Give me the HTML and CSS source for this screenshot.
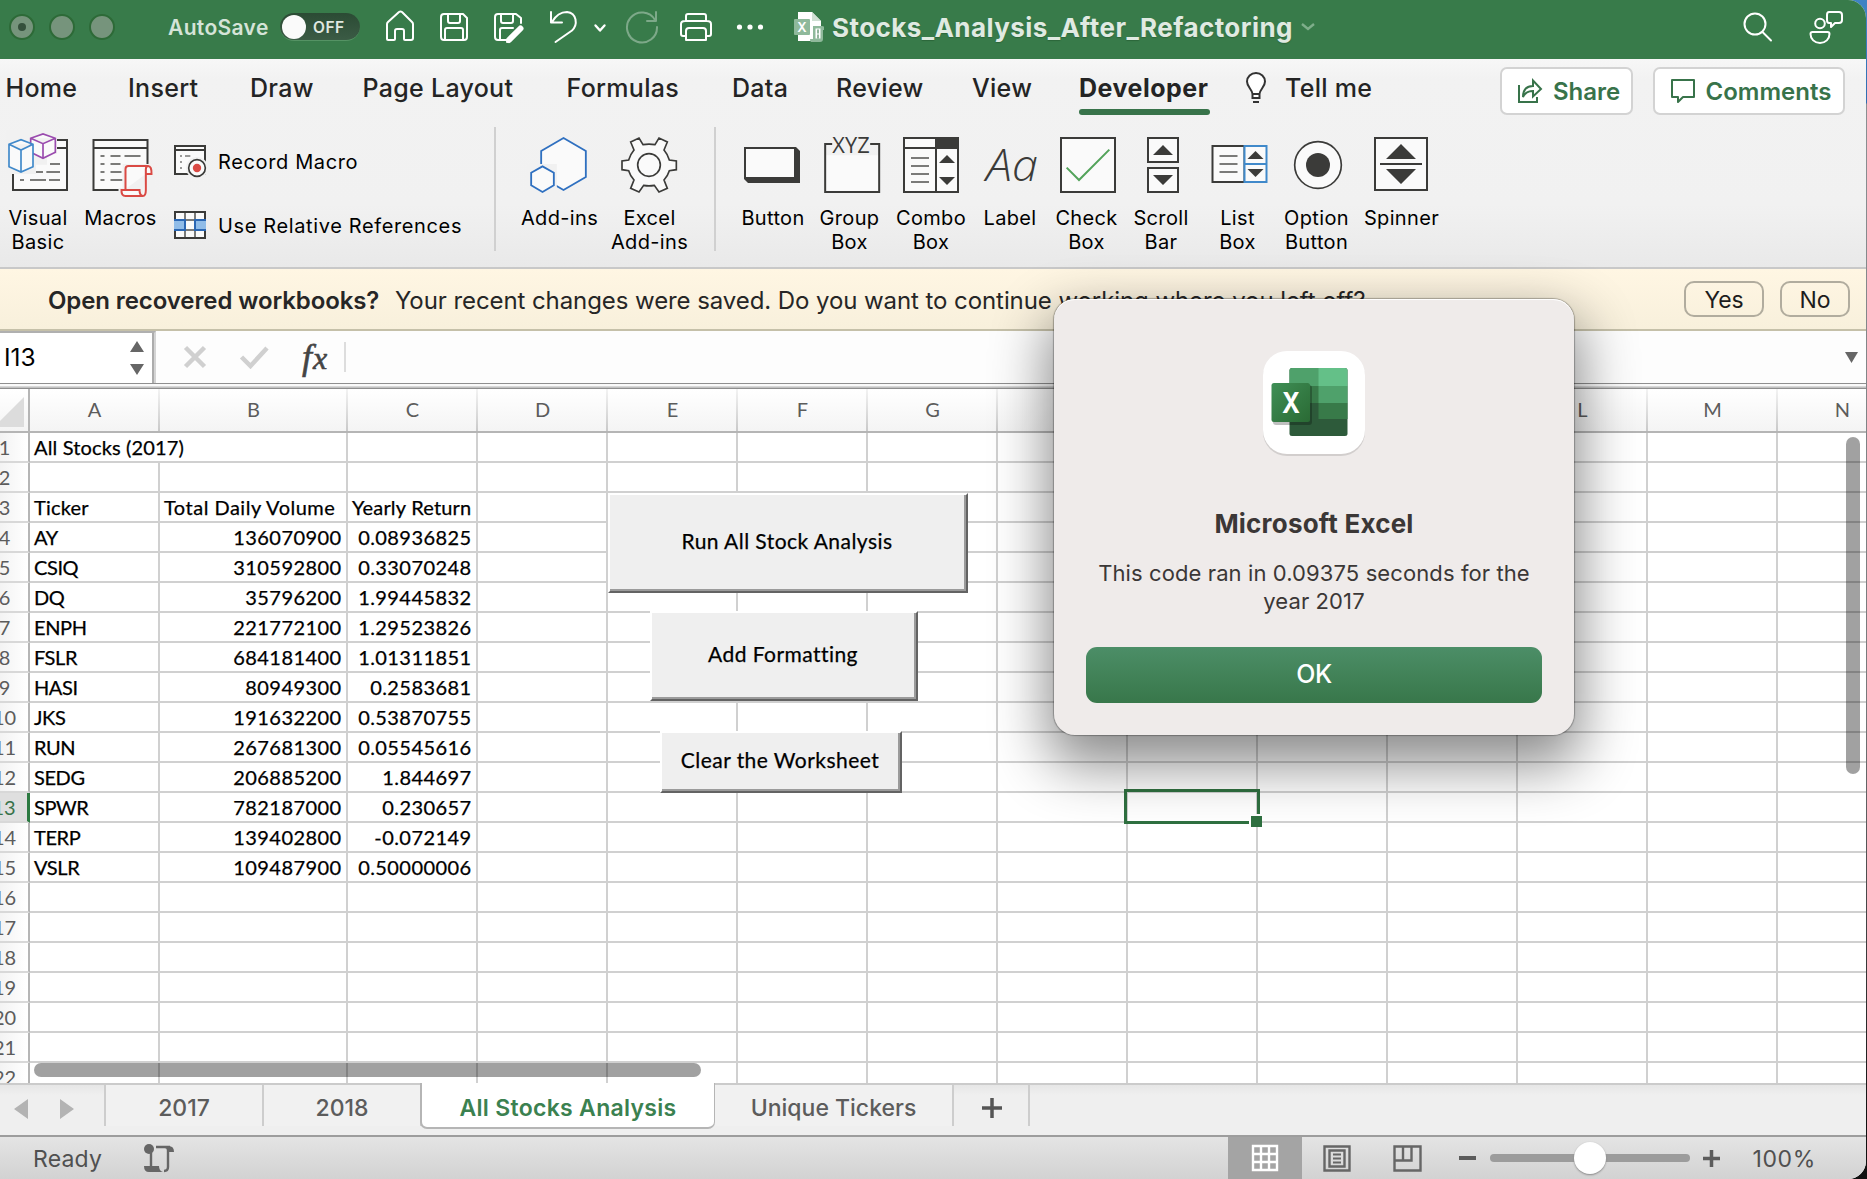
FILE: index.html
```html
<!DOCTYPE html>
<html lang="en">
<head>
<meta charset="utf-8">
<title>Stocks_Analysis_After_Refactoring</title>
<link rel="stylesheet" href="styles.css">
</head>
<body>
<div class="window">
  <header class="titlebar">
    <div class="lights"><i class="light dirty"></i><i class="light"></i><i class="light"></i></div>
    <span class="autosave">AutoSave</span>
    <span class="toggle"><i class="knob"></i><span class="off">OFF</span></span>
    <svg class="quick" width="440" height="34" viewBox="384 10 440 34" fill="none" stroke="#fff" stroke-width="2" stroke-linejoin="round" stroke-linecap="round">
      <path d="M387 24v15q0 1 1 1h6q1 0 1-1v-8q0-2 2-2h5q2 0 2 2v8q0 1 1 1h6q2 0 2-2V24q0-1-1-2L402 12q-1.500-1-3 0L388 22q-1 1-1 2z"/>
      <path d="M444 14h19l4 4v19q0 3-3 3h-20q-3 0-3-3V17q0-3 3-3zM448 14v7q0 2 2 2h8q2 0 2-2v-7M445 40V30q0-2 2-2h14q2 0 2 2v10"/>
      <path d="M506 40h-8q-3 0-3-3V17q0-3 3-3h18l5 4v5M501 14v7q0 2 2 2h8q2 0 2-2v-7M500 40V30q0-2 2-2h11"/>
      <path d="M520.500 28.500L509 40" stroke-width="6"/><path d="M507 42l1-3 2 2z"/>
      <path d="M551 12v10.500h11M552 22c4-7 10-10 15-10 10 1 11 13 5 18.500L555.500 42"/>
      <path d="M595.500 25.500l4.500 5 4.500-5" stroke-width="2.400"/>
      <g opacity=".35"><path d="M656 12v9h-9M655 20a15 15 0 1 0 2 7"/></g>
      <path d="M686 21v-5q0-2 2-2h16q2 0 2 2v5M686 36h-3q-2 0-2-2V24q0-3 4-3h22q4 0 4 3v10q0 2-2 2h-3M689 28h14q3 0 3 3v9h-20v-9q0-3 3-3z"/>
      <g fill="#fff" stroke="none"><circle cx="739.500" cy="27" r="2.600"/><circle cx="750" cy="27" r="2.600"/><circle cx="760.500" cy="27" r="2.600"/></g>
      <g stroke="none"><path d="M798 12h14l9 9v20h-23z" fill="#fff"/><path d="M812 12l9 9h-9z" fill="#cfe0d3"/><rect x="794" y="19" width="16" height="16" rx="1" fill="#8fb99b"/>
      <text x="802" y="32" font-family="Inter,sans-serif" font-weight="600" font-size="13" text-anchor="middle" fill="#fff">X</text>
      <path d="M813 26h9q3 0 3 4h-2v9q0 3-3 3h-9q-1 0-1-3h3z" fill="#8fb99b"/><path d="M815.500 28.500h5v10h-5z" fill="#fff"/><path d="M818 30v3M818 35v3" stroke="#6d9c7b" stroke-width="1.500"/></g>
    </svg>
    <span class="doc">Stocks_Analysis_After_Refactoring</span>
    <svg class="docmore" width="16" height="10" viewBox="0 0 16 10" fill="none" stroke="#7fae8b" stroke-width="2.400"><path d="M2 2l6 5 6-5"/></svg>
    <svg class="search" width="30" height="34" viewBox="0 0 30 34" fill="none" stroke="#fff" stroke-width="2" stroke-linecap="round"><circle cx="12" cy="14" r="10.500"/><path d="M19.500 22l8.500 8.500"/></svg>
    <svg class="people" width="34" height="34" viewBox="0 0 34 34" fill="none" stroke="#fff" stroke-width="2" stroke-linejoin="round"><circle cx="11" cy="13.500" r="4.800"/><path d="M3.500 22h15q2 0 2 2c0 5-4 9-9.500 9s-9.500-4-9.500-9q0-2 2-2zM20 2h10q3 0 3 3v5q0 3-3 3h-4l-4 4v-4h-2q-2 0-2-3V5q0-3 2-3z"/></svg>
  </header>

  <section class="ribbon">
    <nav class="tabs">
      <span>Home</span><span>Insert</span><span>Draw</span><span>Page Layout</span><span>Formulas</span><span>Data</span><span>Review</span><span>View</span><span class="current">Developer</span>
      <svg width="22" height="32" viewBox="0 0 22 32" fill="#fff" stroke="#333" stroke-width="2"><path d="M7.500 22C7 17 2 15 2 9.500a9 8.500 0 0 1 18 0C20 15 15 17 14.500 22zM7.500 22v4h7v-4"/><path d="M8 30h6"/></svg>
      <span>Tell me</span>
      <span class="action share"><svg width="26" height="26" viewBox="0 0 26 26" fill="none" stroke="#38734a" stroke-width="2"><path d="M2 7v17h18v-5"/><path d="M6 19c0-8 4-11 10-11V2.500l8 8.500-8 7.500V13c-5 0-8 1.500-10 6z"/></svg><b>Share</b></span>
      <span class="action comments"><svg width="26" height="26" viewBox="0 0 26 26" fill="none" stroke="#38734a" stroke-width="2" stroke-linejoin="round"><path d="M2 2h22v17H13l-5 5v-5H2z"/></svg><b>Comments</b></span>
    </nav>
    <div class="tools">
      <div class="tool w76"><svg viewBox="15 30 198 216" fill="none" stroke="#3b3b39" stroke-width="6">
        <path d="M39 60h162v150H39z" fill="#fafafa"/><path d="M90 84h111"/>
        <path d="M18 30h153v72h-30v32h-33v28H18z" fill="#f1f1f1" stroke="none"/>
        <path d="M150 132h30M108 156h21M139 156h41M60 180h12M90 180h48M147 180h33" stroke="#7b7b79"/>
        <path d="M92 55l37-13 37 13v42l-37 18-37-18zM92 55l37 16 37-16M129 71v44" stroke="#9a4bae" fill="#fafafa" stroke-width="5"/>
        <path d="M27 73l36-14 36 14v67l-36 16-36-16zM27 73l36 17 36-17M63 90v66" stroke="#4089ca" fill="#fafafa" stroke-width="5"/></svg><span>Visual<br>Basic</span></div>
      <div class="tool w89"><svg viewBox="262.500 30 198 216" fill="none" stroke="#3b3b39" stroke-width="6">
        <path d="M279 60h162v150H279z" fill="#fafafa"/><path d="M279 84h162"/>
        <path d="M300 108h12M330 108h30M372 108h48M300 132h12M330 132h30M300 156h12M330 156h33M300 180h12M330 180h36" stroke="#7b7b79"/>
        <path d="M366 132h96v102H354v-30h12z" fill="#f1f1f1" stroke="none"/>
        <path d="M375 207v-60q0-9 9-9h58q12 0 11 24h-17M436 162v48q0 18-9 18M436 162v-14q0-10 8-10M363 210h54q0 18 12 18h-54q-13 0-12-18z" stroke="#da4a44" fill="#fafafa"/></svg><span>Macros</span></div>
      <div class="small">
        <div class="line"><svg width="34" height="36" viewBox="519 69 102 108" fill="none" stroke="#3b3b39" stroke-width="6"><path d="M525 78h90v84h-90z" fill="#fafafa"/><path d="M525 90h90"/><path d="M540 108h6M555 108h16M540 126h6M540 144h6" stroke="#7b7b79" stroke-width="5"/><circle cx="591" cy="144" r="33" fill="#f1f1f1" stroke="none"/><circle cx="591" cy="144" r="25" fill="#fafafa" stroke-width="5"/><circle cx="591" cy="144" r="12.500" fill="#da4a44" stroke="none"/></svg><span>Record Macro</span></div>
        <div class="line"><svg width="34" height="36" viewBox="519 261 102 108" fill="none" stroke="#3b3b39" stroke-width="6"><path d="M525 276h90v78h-90z" fill="#fafafa"/><path d="M555 279v72M585 279v72M528 300h84M528 330h84" stroke="#7b7b79"/><path d="M522 300h33v30h-33M618 300h-33v30h33" stroke="#2a66b3" fill="#90bce8"/></svg><span>Use Relative References</span></div>
      </div>
      <i class="rule"></i>
      <div class="tool w89"><svg viewBox="139.500 30 198 216" fill="#fafafa" stroke="#2f70c0" stroke-width="5.500"><path d="M249 54l67 39v78l-67 39-67-39V93z"/><path d="M141 132h88v96h-88z" fill="#f1f1f1" stroke="none"/><path d="M186 139l34 19v38l-34 20-34-20v-38z"/></svg><span>Add-ins</span></div>
      <div class="tool w91"><svg viewBox="411 30 198 216" fill="#fafafa" stroke="#3b3b39" stroke-width="5"><path d="M452 66l25-12 12 20q18-3 36 0l12-20 25 12-10 24q11 13 16 30l21 3v26l-21 3q-5 16-16 28l10 25-25 11-14-20q-16 3-32 0l-14 20-25-11 10-25q-11-12-16-28l-20-3v-26l20-3q5-17 16-30z"/><circle cx="507" cy="135" r="34"/></svg><span>Excel<br>Add-ins</span></div>
      <i class="rule second"></i>
      <div class="tool w74"><svg viewBox="780 30 198 216"><path d="M792 81h156l12 12v96H804l-12-12z" fill="#3b3b39"/><path d="M798 87h144v84H798z" fill="#fafafa"/></svg><span>Button</span></div>
      <div class="tool w79"><svg viewBox="1007.500 30 198 216" fill="none" stroke="#3b3b39" stroke-width="6"><path d="M1032 106h162v110h-162z" fill="#fafafa" stroke="none"/><path d="M1053 72h-21v144h162V72h-27"/><text class="xyz" x="1053" y="99" textLength="113" lengthAdjust="spacingAndGlyphs">XYZ</text></svg><span>Group<br>Box</span></div>
      <div class="tool w84"><svg viewBox="1254 30 198 216" fill="none" stroke="#3b3b39" stroke-width="6"><path d="M1272 54h162v162h-162z" fill="#fafafa"/><path d="M1272 84h162M1368 54v162"/><path d="M1368 54h66v30h-66z" fill="#3b3b39"/><path d="M1293 114h54M1293 138h54M1293 162h54M1293 186h54" stroke="#7b7b79"/><path d="M1377 129h48l-24-24zM1377 171h48l-24 24z" fill="#3b3b39" stroke="none"/></svg><span>Combo<br>Box</span></div>
      <div class="tool w74"><svg viewBox="49 30 198 216"><text class="aa" x="76" y="183" textLength="156" lengthAdjust="spacingAndGlyphs">Aa</text></svg><span>Label</span></div>
      <div class="tool w79"><svg viewBox="279 30 198 216" fill="none" stroke="#3b3b39" stroke-width="6"><path d="M300 54h162v162H300z" fill="#fafafa"/><path d="M317 143l37 37 91-91" stroke="#52a35a"/></svg><span>Check<br>Box</span></div>
      <div class="tool w70"><svg viewBox="504 30 198 216" fill="#fafafa" stroke="#3b3b39" stroke-width="6"><path d="M564 54h90v72h-90zM564 144h90v72h-90z"/><path d="M579 105h60l-30-30zM579 165h60l-30 30z" fill="#3b3b39" stroke="none"/></svg><span>Scroll<br>Bar</span></div>
      <div class="tool w83"><svg viewBox="733.500 30 198 216" fill="#fafafa" stroke="#3b3b39" stroke-width="6"><path d="M756 78h96v108h-96z"/><path d="M777 108h54M777 132h54M777 156h54" stroke="#7b7b79"/><path d="M852 78h66v108h-66zM852 132h66" stroke="#4089ca"/><path d="M861 117h48l-24-24zM861 147h48l-24 24z" fill="#3b3b39" stroke="none"/></svg><span>List<br>Box</span></div>
      <div class="tool w75"><svg viewBox="969 30 198 216" fill="#fafafa" stroke="#3b3b39" stroke-width="5"><circle cx="1071" cy="135" r="70"/><circle cx="1071" cy="135" r="36" fill="#3b3b39" stroke="none"/></svg><span>Option<br>Button</span></div>
      <div class="tool w95"><svg viewBox="1224 30 198 216" fill="#fafafa" stroke="#3b3b39" stroke-width="6"><path d="M1242 54h156v156h-156z"/><path d="M1257 132h126"/><path d="M1275 117h90l-45-45zM1275 147h90l-45 45z" fill="#3b3b39" stroke="none"/></svg><span>Spinner</span></div>
    </div>
  </section>

  <section class="message"><b>Open recovered workbooks?</b><span class="ask">Your recent changes were saved. Do you want to continue working where you left off?</span><span class="pill yes">Yes</span><span class="pill no">No</span></section>

  <section class="formula">
    <div class="namebox"><span>I13</span><svg width="14" height="34" viewBox="0 0 14 34" fill="#666"><path d="M0 11h14L7 0zM0 23h14L7 34z"/></svg></div>
    <svg class="marks" width="86" height="24" viewBox="183 346 86 24" fill="none" stroke="#d0d0d0" stroke-width="4.500"><path d="M185.500 348.500l19 19M204.500 348.500l-19 19M241.500 358l9 9L267 349"/></svg>
    <span class="fx"><span>f</span>x</span>
    <i class="fline"></i>
    <svg class="expand" width="13" height="11" viewBox="0 0 13 11" fill="#666"><path d="M0 0h13L6.500 11z"/></svg>
  </section>
  <div class="splitter"></div>

  <main class="sheet" id="sheet">
    <div class="btn run">Run All Stock Analysis</div>
    <div class="btn add">Add Formatting</div>
    <div class="btn clear">Clear the Worksheet</div>
    <div class="selection"></div>
    <div class="vscroll"></div>
    <div class="hscroll"></div>
  </main>

  <nav class="sheets">
    <div class="arrows"><svg width="60" height="20" viewBox="0 0 60 20" fill="#b3b3b3"><path d="M14 0v20L0 10zM46 0v20l14-10z"/></svg></div>
    <span class="st">2017</span><span class="st">2018</span><span class="st active">All Stocks Analysis</span><span class="st wide">Unique Tickers</span>
    <span class="st plus"><svg width="22" height="22" viewBox="0 0 22 22" stroke="#555" stroke-width="3.500"><path d="M1 11h20M11 1v20"/></svg></span>
  </nav>

  <footer class="status">
    <span class="ready">Ready</span>
    <svg class="macro" width="32" height="30" viewBox="143 1142 32 30" fill="none" stroke="#666" stroke-width="2.400"><circle cx="149" cy="1148" r="5" fill="#666" stroke="none"/><path d="M151 1152v14M156 1146h14M165 1146q3 0 3 3v17q0 4-4 4"/><path d="M167 1145q7-1 7 6h-6z" fill="#666" stroke="none"/><path d="M144 1165h15q0 5 4 6h-14q-5 0-5-6z" fill="#666" stroke="none"/></svg>
    <span class="view on"><svg width="28" height="28" viewBox="0 0 28 28" fill="none" stroke="#fff" stroke-width="2.400"><path d="M2 2h24v24H2zM10 2v24M18 2v24M2 10h24M2 18h24"/></svg></span>
    <svg class="vpage" width="28" height="27" viewBox="0 0 28 27" fill="none" stroke="#666" stroke-width="2.400"><path d="M1.500 1.500h25v24h-25z"/><path d="M6.500 5.500h15v16h-15z"/><path d="M10 9.500h8M10 13.500h8M10 17.500h8" stroke-width="2"/></svg>
    <svg class="vbreak" width="29" height="27" viewBox="0 0 29 27" fill="none" stroke="#666" stroke-width="2.400"><path d="M1.500 1.500h26v24h-26zM1.500 15.500h17v-14M10 1.500v14"/></svg>
    <i class="minus"></i>
    <div class="slider"><i></i></div>
    <svg class="zplus" width="17" height="17" viewBox="0 0 17 17" stroke="#5c5c5c" stroke-width="3.500"><path d="M0 8.500h17M8.500 0v17"/></svg>
    <span class="zoom">100%</span>
  </footer>

  <div class="dialog">
    <svg class="appicon" width="112" height="114" viewBox="1258 346 112 114">
      <defs><linearGradient id="xg" x1="0" y1="0" x2="1" y2="1"><stop offset="0" stop-color="#3f8f56"/><stop offset="1" stop-color="#2a6a34"/></linearGradient><clipPath id="book"><rect x="1289.500" y="368" width="58" height="68" rx="2.500"/></clipPath></defs>
      <rect x="1263" y="353" width="102" height="103" rx="24" fill="#000" opacity=".12"/>
      <rect x="1263" y="351" width="102" height="103" rx="24" fill="#fff"/>
      <g clip-path="url(#book)"><rect x="1289" y="368" width="59" height="68" fill="#2d5a3a"/><rect x="1289" y="368" width="30" height="18" fill="#4fa16b"/><rect x="1318.500" y="368" width="30" height="18" fill="#64c088"/><rect x="1289" y="386" width="30" height="17" fill="#387a49"/><rect x="1318.500" y="386" width="30" height="17" fill="#4fa16b"/><rect x="1318.500" y="403" width="30" height="16" fill="#387a49"/></g>
      <rect x="1273" y="385" width="39" height="40" rx="3" fill="#000" opacity=".25"/>
      <rect x="1271.500" y="383" width="38.500" height="39" rx="2.500" fill="url(#xg)"/>
      <text class="bigx" x="1282" y="413" textLength="18" lengthAdjust="spacingAndGlyphs">X</text>
    </svg>
    <h1>Microsoft Excel</h1>
    <p>This code ran in 0.09375 seconds for the<br>year 2017</p>
    <button>OK</button>
  </div>
</div>
<script src="sheet.js"></script>
</body>
</html>
```
FILE: styles.css
```css
* { box-sizing: border-box; }
body { margin: 0; width: 1867px; height: 1179px; overflow: hidden; background: linear-gradient(#3f83c4 0 20px, #2f6cb0 103px, #8a8f92 104px, #77797b 700px, #111 1120px); font-family: Inter, "Liberation Sans", sans-serif; }
svg { display: block; flex: none; }
.window { position: relative; width: 1866px; height: 1179px; overflow: hidden; border-radius: 0 18px 18px 0; background: #fff; display: flex; flex-direction: column; }
.window > * { flex: none; }

.titlebar { height: 59px; background: #387b4a; display: flex; align-items: center; padding-bottom: 5px; }
.lights { display: flex; gap: 14px; margin-left: 9px; width: 159px; }
.light { width: 26px; height: 26px; border-radius: 50%; background: #76947c; border: 2px solid #2d6a37; position: relative; }
.dirty::after { content: ""; position: absolute; left: 7px; top: 7px; width: 8px; height: 8px; border-radius: 50%; background: #35503c; }
.autosave { width: 112px; font-size: 21px; font-weight: 600; color: #d5e4d8; letter-spacing: .35px; white-space: nowrap; }
.toggle { width: 80px; height: 28px; border-radius: 14px; background: linear-gradient(#2b4b34, #3b5b45); border-bottom: 1px solid #559364; display: flex; align-items: center; padding-left: 2px; }
.knob { width: 24px; height: 24px; border-radius: 50%; background: #fafafa; }
.off { margin-left: 7px; padding-top: 2px; font-size: 15.500px; font-weight: 600; color: #e0e8e1; letter-spacing: .5px; }
.quick { margin-left: 24px; }
.doc { margin-left: 8px; width: 468px; padding-top: 1px; font-size: 26px; font-weight: 700; color: #e0eae2; letter-spacing: .42px; white-space: nowrap; text-shadow: 0 1px 1px #2c663a; }
.docmore { margin-left: 0; }
.search { margin-left: 427px; }
.people { margin-left: 36px; }

.ribbon { height: 210px; background: linear-gradient(#f7f7f7, #f2f2f2 20px, #f1f1f1 70%, #e9e9e9); border-bottom: 2px solid #c8c8c8; }
.tabs { height: 68px; display: grid; grid-template-columns: 122.500px 122px 112.500px 204px 165.500px 104px 136px 107px 166px 40px 215px 152.500px 192px; padding-left: 5.500px; font-size: 25px; font-weight: 500; color: #242424; white-space: nowrap; line-height: 30px; letter-spacing: .3px; align-items: start; padding-top: 8px; }
.tabs > span:not(.action) { padding-top: 6px; }
.tabs > svg { margin-top: 5px; }
.tabs .current { position: relative; font-weight: 700; width: 132px; height: 48px; letter-spacing: .5px; }
.current::after { content: ""; position: absolute; left: 0; bottom: 0; width: 131px; height: 6px; border-radius: 3px; background: #38734a; }
.action { height: 48px; background: #fff; border: 2px solid #d3d3d3; border-radius: 7px; display: flex; align-items: center; color: #38734a; padding-left: 15px; gap: 10px; font-size: 24px; letter-spacing: 0; }
.action b { font-weight: 600; padding-top: 2px; }
.share { width: 133px; }
.tools { display: flex; padding-top: 3px; font-size: 20px; color: #000; letter-spacing: .35px; line-height: 24px; }
.tool { display: flex; flex-direction: column; align-items: center; text-align: center; white-space: nowrap; gap: 4px; }
.tool svg { width: 66px; height: 72px; }
.w70 { width: 70px; } .w74 { width: 74px; } .w75 { width: 75px; } .w76 { width: 76px; } .w79 { width: 79px; } .w83 { width: 83px; } .w84 { width: 84px; } .w89 { width: 89px; } .w91 { width: 91px; } .w95 { width: 95px; }
.small { width: 321px; padding: 13px 0 0 8px; display: flex; flex-direction: column; gap: 28px; }
.line { display: flex; align-items: center; gap: 11px; white-space: nowrap; letter-spacing: .63px; }
.line span { padding-top: 2px; }
.rule { width: 2px; height: 124px; margin: -3px 19px 0 8px; background: #d0d0d0; }
.rule.second { margin: -3px 20.500px 0 18.500px; }
.xyz { font: 400 66px "Open Sans", sans-serif; fill: #3b3b39; stroke: none; }
.aa { font: italic 300 134px "Open Sans", sans-serif; fill: #3b3b39; }

.message { height: 62px; padding-left: 48px; background: linear-gradient(#fff6e3, #f8f0dc); border-bottom: 2px solid #c5c0a9; display: flex; align-items: center; font-size: 24px; color: #262626; white-space: nowrap; letter-spacing: -.08px; }
.message b { font-weight: 600; width: 347px; padding-top: 2px; letter-spacing: -.1px; }
.ask { width: 1289px; padding-top: 2px; }
.pill { height: 36px; border: 2px solid #b1ac9e; border-radius: 10px; text-align: center; line-height: 34px; color: #1d1d1d; font-size: 23px; }
.yes { width: 80px; } .no { width: 70px; margin-left: 16px; }

.formula { height: 52px; display: flex; align-items: center; background: #fdfdfd; }
.namebox { width: 156px; height: 52px; border-top: 2px solid #b0b0b0; border-right: 2px solid #d4d4d4; box-shadow: inset -2px 0 #acacac; display: flex; align-items: center; justify-content: space-between; padding: 0 10px 0 4px; font-size: 24.500px; color: #000; letter-spacing: 0; background: #fff; }
.namebox span { padding-bottom: 3px; }
.marks { margin-left: 27px; }
.fx { width: 42px; margin-left: 33px; font: italic 32px "Liberation Serif", serif; -webkit-text-stroke: .6px #444; color: #444; letter-spacing: 1px; }
.fx span { font-size: 36px; }
.fline { width: 2px; height: 30px; background: #ddd; margin-left: 0; }
.expand { margin-left: 1499px; }
.splitter { height: 6px; background: linear-gradient(#8f8f8f 0 1px, #fafafa 1px 3px, #d8d8d8 3px 4px, #c2c2c2 4px 5px, #8f8f8f 5px 6px); }

.sheet { position: relative; height: 694px; overflow: hidden; font-family: Lato, sans-serif; font-size: 20px; color: #000; }
.row { display: flex; height: 30px; width: 2100px; }
.cell { flex: none; width: 130px; height: 30px; border-right: 2px solid #d0d0d0; border-bottom: 2px solid #d0d0d0; padding: 0 5px 0 4px; line-height: 29px; white-space: nowrap; letter-spacing: -.4px; -webkit-text-stroke: .25px #000; }
.cell.b { width: 188px; } .cell.merged { width: 318px; letter-spacing: .15px; }
.cell.label { letter-spacing: .2px; } .cell.b.label { letter-spacing: .5px; }
.cell.num { text-align: right; letter-spacing: .42px; padding-right: 4.500px; }
.rowhead { flex: none; width: 49px; margin-left: -19px; border-right: 2px solid #b5b5b5; border-bottom: 2px solid #d8d8d8; text-align: center; line-height: 29px; color: #5c5c5c; background: linear-gradient(90deg, #f3f3f3 40%, #fff); }
.rowhead.picked { background: #dfdfdf; color: #38734a; border-right: 3px solid #2c7a41; }
.heads { height: 44px; background: linear-gradient(#fff, #f4f4f4); border-bottom: 2px solid #b5b5b5; }
.heads .cell { height: 42px; border-bottom: 0; border-image: linear-gradient(#f4f4f4, #c8c8c8) 1; border-width: 0 2px 0 0; padding: 0 3px 0 4px; text-align: center; line-height: 40px; color: #5c5c5c; -webkit-text-stroke: 0; letter-spacing: 0; }
.corner { flex: none; width: 30px; height: 42px; border-right: 2px solid #b5b5b5; }
.corner svg { margin-top: 8px; }
.btn { position: absolute; background: #efefef; border: 2px solid; border-color: #fff #636363 #636363 #fff; box-shadow: inset -2px -2px #9b9b9b; display: flex; align-items: center; justify-content: center; white-space: nowrap; font-size: 21px; letter-spacing: .45px; -webkit-text-stroke: .25px #000; padding: 0 2px 5px 0; }
.run { left: 608px; top: 104px; width: 360px; height: 100px; }
.add { left: 650px; top: 222px; width: 268px; height: 90px; }
.clear { left: 660px; top: 342px; width: 242px; height: 62px; }
.selection { position: absolute; left: 1124px; top: 400px; width: 136px; height: 35px; border: 3px solid #2f7040; }
.selection::after { content: ""; position: absolute; right: -5px; bottom: -6px; width: 11px; height: 11px; background: #2f7040; border: solid #fff; border-width: 2px 0 0 2px; }
.vscroll { position: absolute; left: 1846px; top: 48px; width: 14px; height: 337px; border-radius: 7px; background: #000; opacity: .37; }
.hscroll { position: absolute; left: 34px; top: 674px; width: 667px; height: 14px; border-radius: 7px; background: #000; opacity: .37; }

.sheets { height: 54px; background: linear-gradient(#e6e6e6 0, #efefef 10px); border-top: 2px solid #cbcbcb; border-bottom: 2px solid #9d9d9d; display: flex; font-size: 23px; color: #5c5c5c; }
.arrows { width: 106px; height: 41px; border-right: 2px solid #cdcdcd; padding: 14px 0 0 14px; }
.st { width: 158px; height: 41px; border-right: 2px solid #cdcdcd; text-align: center; line-height: 47px; white-space: nowrap; font-weight: 500; background: #f1f1f1; }
.st.active { width: 295px; height: 46px; margin-top: -2px; padding-top: 2px; margin-left: -2px; background: #fff; color: #3b8150; font-weight: 600; letter-spacing: .3px; border: solid #b5b5b5; border-width: 0 1px 2px 2px; border-radius: 0 0 7px 7px; }
.st.wide { width: 239px; padding-right: 0; }
.st.plus { width: 76px; background: none; display: flex; justify-content: center; padding: 12px 0 0 2px; }
.status { height: 42px; background: linear-gradient(#e4e4e4, #d2d2d2); display: flex; align-items: center; font-size: 23px; color: #505050; }
.ready { margin-left: 33px; width: 110px; padding-top: 2px; letter-spacing: .2px; }
.view { width: 74px; height: 42px; margin-left: 1053px; background: #a4a4a4; display: flex; align-items: center; justify-content: center; }
.vpage { margin-left: 21px; } .vbreak { margin-left: 42px; }
.minus { width: 17px; height: 4px; margin-left: 36.500px; background: #5c5c5c; }
.slider { width: 200px; height: 8px; margin-left: 14px; border-radius: 4px; background: #9c9c9c; position: relative; }
.slider i { position: absolute; left: 84px; top: -12px; width: 32px; height: 32px; border-radius: 50%; background: #fff; box-shadow: 0 1px 2px #888; }
.zplus { margin-left: 13px; }
.zoom { margin-left: 33px; padding-top: 2px; letter-spacing: .6px; }

.dialog { position: absolute; left: 1054px; top: 299px; width: 520px; height: 436px; border-radius: 21px; background: #efebea; box-shadow: 0 0 1px 1px rgba(0,0,0,.28), inset 0 1px #fff, 0 24px 56px 6px rgba(0,0,0,.46); display: flex; flex-direction: column; align-items: center; color: #3b3736; }
.appicon { margin-top: 47px; }
.bigx { font: 700 28px Inter, sans-serif; fill: #fff; }
.dialog h1 { margin: 49px 0 0; font-size: 26px; line-height: 30px; font-weight: 700; white-space: nowrap; letter-spacing: .2px; }
.dialog p { margin: 20px 0 0; font-size: 22px; line-height: 28px; text-align: center; white-space: nowrap; letter-spacing: .1px; }
.dialog button { margin: 32px 0 0; width: 456px; height: 56px; border: 0; border-radius: 11px; background: linear-gradient(#4c8e67, #38774a); color: #fff; font: 500 25px Inter, sans-serif; letter-spacing: -.4px; padding: 0 0 2px; }
```
FILE: sheet.js
```js
const sheet = document.getElementById('sheet');
const data = {
  3: ['Ticker', 'Total Daily Volume', 'Yearly Return'],
  4: ['AY', '136070900', '0.08936825'],
  5: ['CSIQ', '310592800', '0.33070248'],
  6: ['DQ', '35796200', '1.99445832'],
  7: ['ENPH', '221772100', '1.29523826'],
  8: ['FSLR', '684181400', '1.01311851'],
  9: ['HASI', '80949300', '0.2583681'],
  10: ['JKS', '191632200', '0.53870755'],
  11: ['RUN', '267681300', '0.05545616'],
  12: ['SEDG', '206885200', '1.844697'],
  13: ['SPWR', '782187000', '0.230657'],
  14: ['TERP', '139402800', '-0.072149'],
  15: ['VSLR', '109487900', '0.50000006']
};
let html = '<div class="row heads"><div class="corner"><svg width="24" height="30"><path d="M24 0v30H-6z" fill="#dcdcdc"/></svg></div>';
for (const c of 'ABCDEFGHIJKLMN') html += `<div class="cell ${c === 'B' ? 'b' : ''}">${c}</div>`;
html += '</div>';
for (let r = 1; r <= 22; r++) {
  html += `<div class="row"><div class="rowhead ${r === 13 ? 'picked' : ''}">${r}</div>`;
  const values = data[r] || [];
  for (let c = 0; c < 15; c++) {
    if (r === 1 && c === 0) { html += '<div class="cell merged">All Stocks (2017)</div>'; c = 1; continue; }
    const cls = (c === 1 ? ' b' : '') + (r > 3 && c > 0 ? ' num' : '') + (r === 3 ? ' label' : '');
    html += `<div class="cell${cls}">${values[c] || ''}</div>`;
  }
  html += '</div>';
}
sheet.insertAdjacentHTML('afterbegin', html);
```
